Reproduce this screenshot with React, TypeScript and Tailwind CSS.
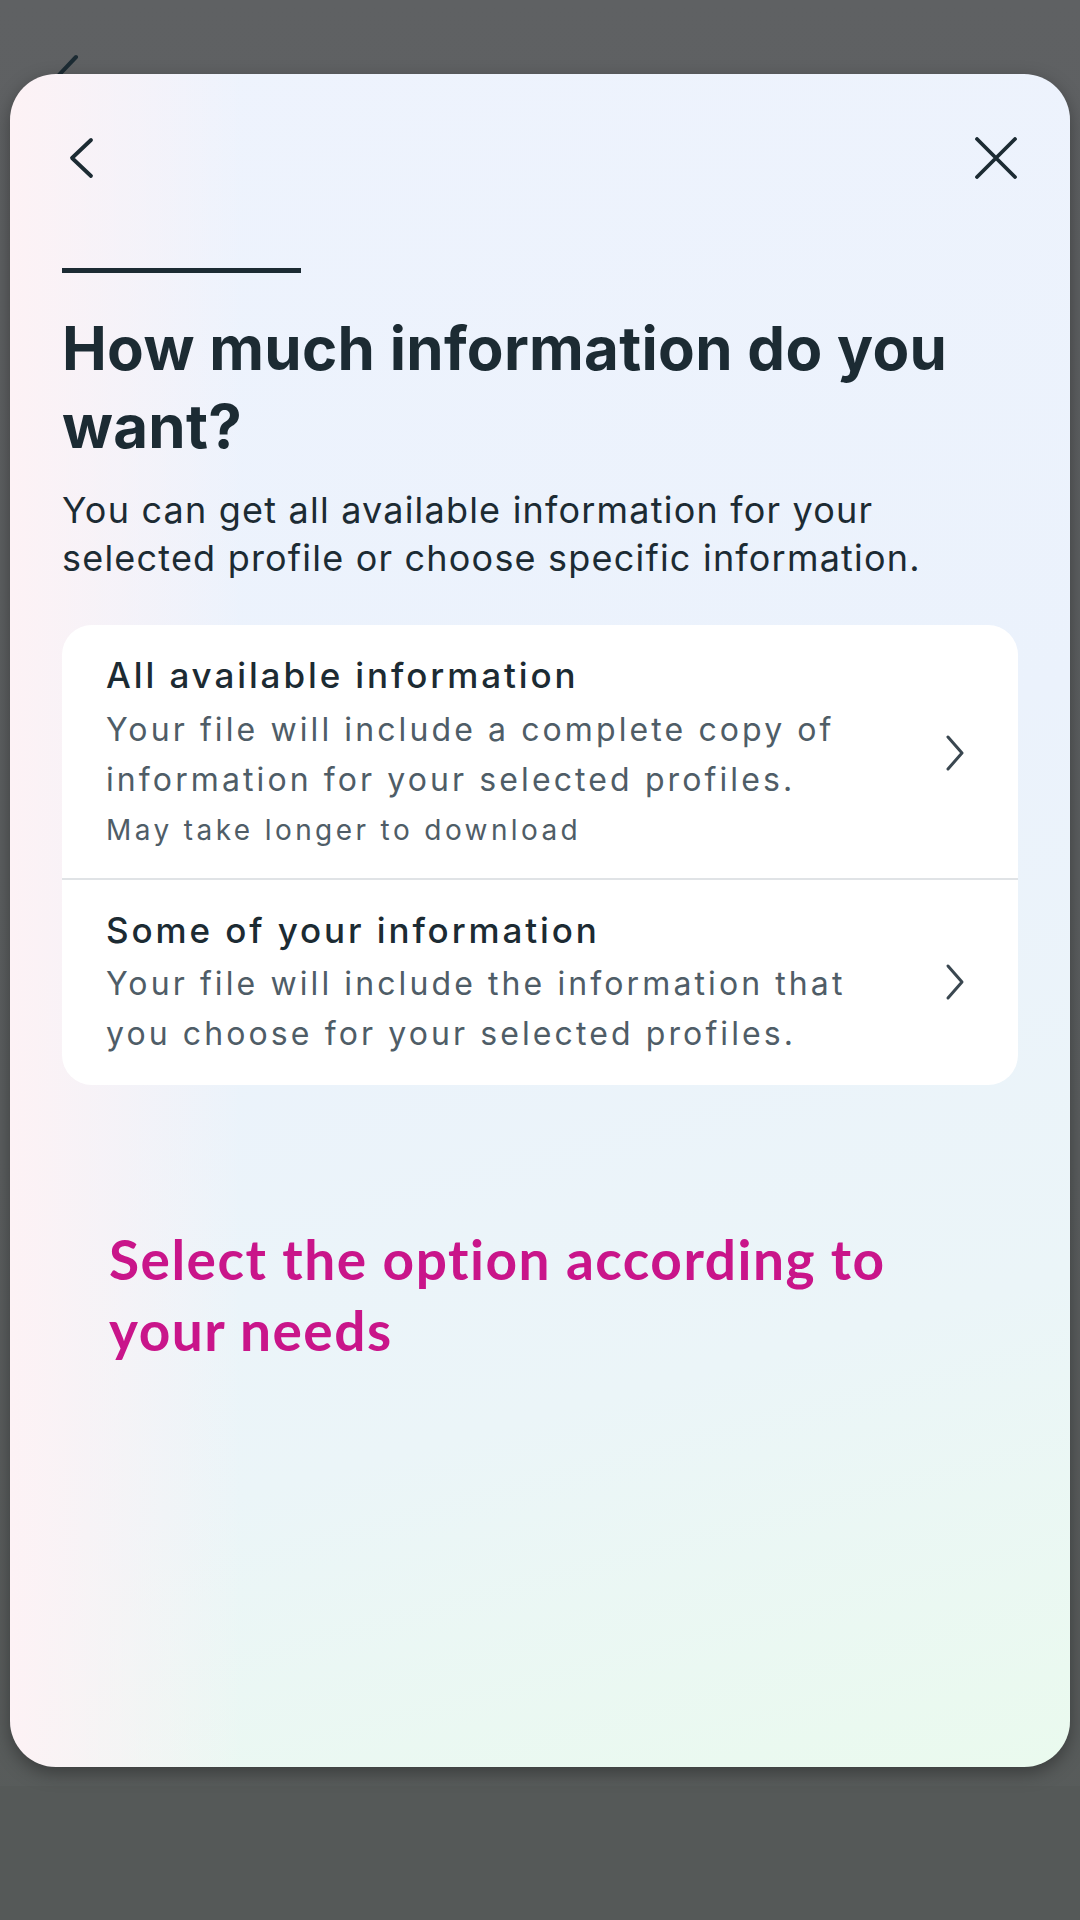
import React from "react";

function BackIcon() {
  return (
    <svg width="30" height="42" viewBox="0 0 30 42" fill="none">
      <path d="M25 3 L6 21 L25 39" stroke="#1c2b33" strokeWidth="3.8" strokeLinecap="round" strokeLinejoin="round" />
    </svg>
  );
}

function CloseIcon() {
  return (
    <svg width="44" height="42" viewBox="0 0 44 42" fill="none">
      <path d="M3 2 L41 40 M41 2 L3 40" stroke="#1c2b33" strokeWidth="3.8" strokeLinecap="round" />
    </svg>
  );
}

function Chevron() {
  return (
    <svg width="20" height="38" viewBox="0 0 20 38" fill="none">
      <path d="M3 3 L17 19 L3 35" stroke="#3a4750" strokeWidth="3" strokeLinecap="round" strokeLinejoin="round" />
    </svg>
  );
}

export default function App() {
  return (
    <div className="w-[1080px] h-[1920px] flex flex-col overflow-hidden bg-[linear-gradient(180deg,#5f6163_0%,#5b5e5f_60%,#575b5a_100%)] font-['Inter',sans-serif]">
      <div className="h-[74px] shrink-0 relative">
        <svg className="absolute left-[52px] top-[54px]" width="30" height="20" viewBox="0 0 30 20" fill="none">
          <path d="M24 3 L6 22" stroke="#1c2b33" strokeWidth="4" strokeLinecap="round" />
        </svg>
      </div>
      <div className="relative z-10 mx-[10px] h-[1693px] shrink-0 rounded-[46px] px-[52px] shadow-[0_6px_18px_rgba(0,0,0,0.35)] bg-[linear-gradient(90deg,rgba(253,242,245,1)_0%,rgba(253,242,245,0)_22%),linear-gradient(165deg,#eef3fd_0%,#ebf2fc_45%,#ebf5f8_75%,#eafaee_100%)]">
        <div className="pt-[63px] flex items-center justify-between">
          <div className="pl-[4px]"><BackIcon /></div>
          <CloseIcon />
        </div>
        <div className="mt-[89px] w-[239px] h-[5px] bg-[#1c2b33]" />
        <h1 className="mt-[36px] text-[60px] leading-[78px] font-bold text-[#1c2b33] tracking-[0.3px]">
          How much information do you want?
        </h1>
        <p className="mt-[21px] text-[36px] leading-[48px] text-[#1c2b33] tracking-[1.2px]">
          You can get all available information for your selected profile or choose specific information.
        </p>
        <div className="mt-[43px] bg-white rounded-[30px] overflow-hidden">
          <div className="flex items-center pl-[44px] pr-[53px] pt-[25px] pb-[23px]">
            <div className="flex-1 mr-[47px]">
              <div className="text-[35px] leading-[50px] font-medium text-[#1c2b33] tracking-[2.9px]">All available information</div>
              <div className="mt-[5px] text-[32px] leading-[50px] text-[#4f5d67] tracking-[3.1px]">
                Your file will include a complete copy of information for your selected profiles.
              </div>
              <div className="text-[28px] leading-[50px] text-[#4f5d67] tracking-[3.4px]">May take longer to download</div>
            </div>
            <Chevron />
          </div>
          <div className="h-[2px] bg-[#e0e3e6]" />
          <div className="flex items-center pl-[44px] pr-[53px] pt-[25px] pb-[26px]">
            <div className="flex-1 mr-[47px]">
              <div className="text-[35px] leading-[50px] font-medium text-[#1c2b33] tracking-[2.9px]">Some of your information</div>
              <div className="mt-[4px] text-[32px] leading-[50px] text-[#4f5d67] tracking-[3.1px]">
                Your file will include the information that you choose for your selected profiles.
              </div>
            </div>
            <Chevron />
          </div>
        </div>
        <p className="mt-[139px] pl-[47px] pr-[60px] text-[55px] leading-[71px] font-bold text-[#c9158a] tracking-[1.5px] font-['Lato',sans-serif]">
          Select the option according to your needs
        </p>
      </div>
      <div className="h-[19px] shrink-0" />
      <div className="flex-1 bg-[#555958]" />
    </div>
  );
}
